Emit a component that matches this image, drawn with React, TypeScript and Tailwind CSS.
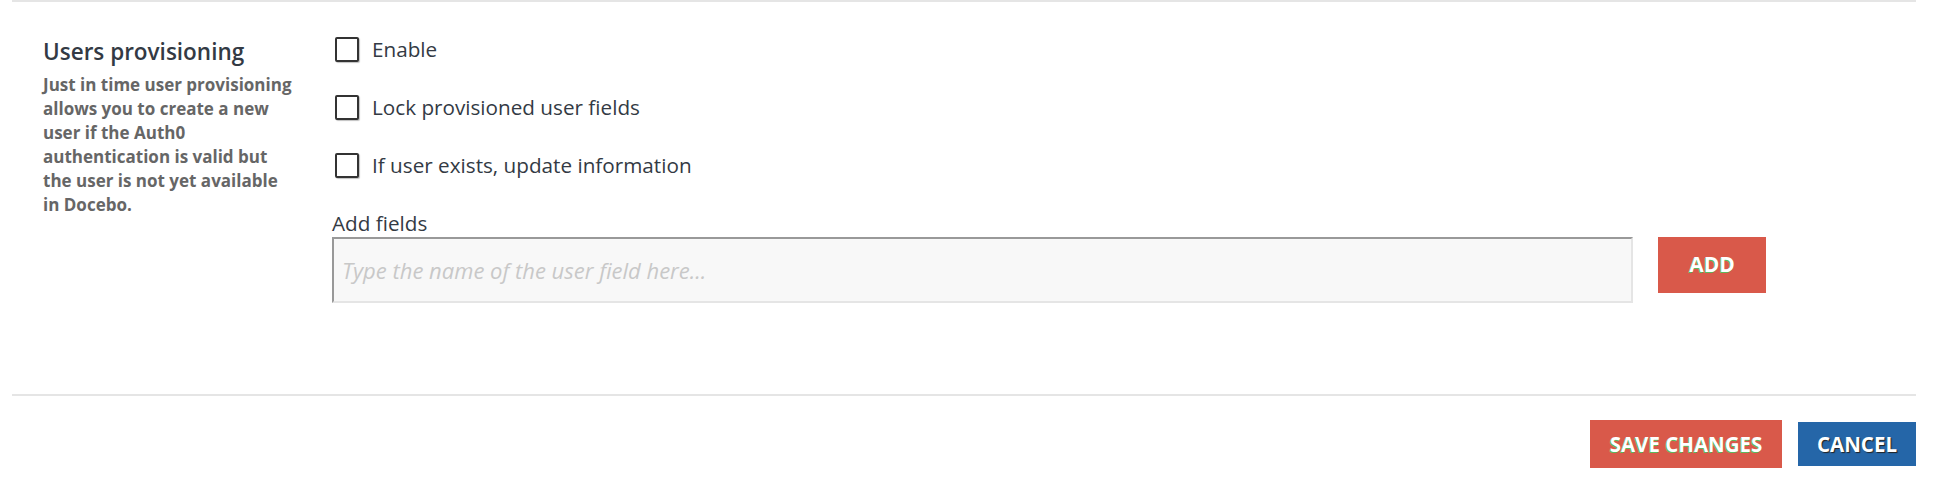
import React from "react";

function Checkbox({ label }: { label: string }) {
  return (
    <label className="flex items-center h-[24px]">
      <span className="ml-[3px] w-[24px] h-[25px] border-2 border-[#333333] rounded-[2px] bg-white shadow-[1px_1px_1px_rgba(0,0,0,0.25)]" />
      <span className="ml-[13px] text-[20.7px] leading-[24px] text-[#333a44]">{label}</span>
    </label>
  );
}

export default function App() {
  return (
    <div className="w-[1942px] h-[498px] bg-white" style={{ fontFamily: '"Open Sans", "Liberation Sans", sans-serif' }}>
      <div className="ml-[12px] w-[1904px]">
        <div className="h-[2px] bg-[#e5e5e5]" />
        <div className="flex pt-[35px] h-[392px]">
          <div className="w-[320px] pl-[31px]">
            <h2 className="text-[22.5px] leading-[30px] font-semibold text-[#333a44]">Users provisioning</h2>
            <p className="mt-[6px] w-[253px] text-[17px] leading-[24px] font-bold text-[#666666]">
              Just in time user provisioning allows you to create a new user if the Auth0 authentication is valid but the user is not yet available in Docebo.
            </p>
          </div>
          <div className="flex-1">
            <div className="flex flex-col gap-[34px]">
              <Checkbox label="Enable" />
              <Checkbox label="Lock provisioned user fields" />
              <Checkbox label="If user exists, update information" />
            </div>
            <div className="mt-[32px] text-[20.7px] leading-[28px] text-[#333a44]">Add fields</div>
            <div className="flex items-start">
              <input
                type="text"
                placeholder="Type the name of the user field here..."
                className="w-[1301px] h-[66px] bg-[#f8f8f8] border-2 border-t-[#999999] border-l-[#999999] border-r-[#e5e5e5] border-b-[#e5e5e5] px-[8px] text-[22px] italic placeholder:text-[#c8c8c8] outline-none"
              />
              <button className="ml-[25px] w-[108px] h-[56px] bg-[#d9594a] text-white font-bold text-[21px] [text-shadow:-1px_1px_0_#5cb85c]">
                ADD
              </button>
            </div>
          </div>
        </div>
        <div className="h-[2px] bg-[#e5e5e5]" />
        <div className="flex justify-end items-center gap-[16px] pt-[24px]">
          <button className="w-[192px] h-[48px] bg-[#d9594a] text-white font-bold text-[20.5px] [text-shadow:-1px_1px_0_#5cb85c]">
            SAVE CHANGES
          </button>
          <button className="w-[118px] h-[44px] bg-[#2566a8] text-white font-bold text-[20.5px] [text-shadow:1px_1px_1px_#222222]">
            CANCEL
          </button>
        </div>
      </div>
    </div>
  );
}
